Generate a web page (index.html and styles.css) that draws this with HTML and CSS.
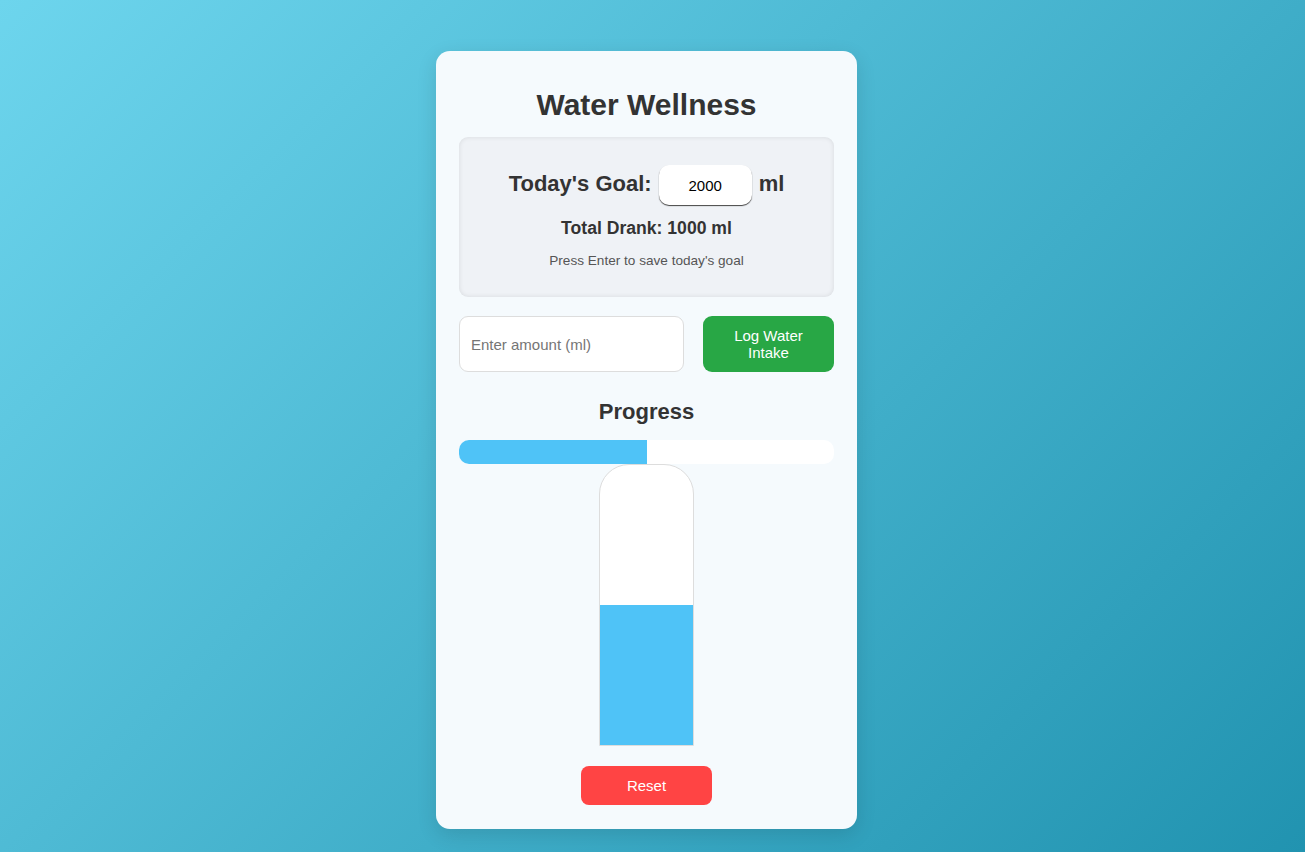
FILE: index.html
```html
<!DOCTYPE html>
<html lang="en">
<head>
<meta charset="utf-8">
<title>Water Wellness</title>
<link rel="stylesheet" href="styles.css">
</head>
<body>
<main class="card">
  <h1 class="title">Water Wellness</h1>
  <section class="goal-box">
    <div class="goal-row">
      <span class="goal-label">Today's Goal:</span>
      <input class="goal-input" type="text" value="2000">
      <span class="goal-label">ml</span>
    </div>
    <p class="total">Total Drank: 1000 ml</p>
    <p class="hint">Press Enter to save today's goal</p>
  </section>
  <div class="log-row">
    <input class="amount-input" type="text" placeholder="Enter amount (ml)">
    <button class="log-btn">Log Water Intake</button>
  </div>
  <h3 class="progress-title">Progress</h3>
  <div class="bar"><div class="bar-fill" style="width:50%"></div></div>
  <div class="bottle"><div class="bottle-fill" style="height:50%"></div></div>
  <button class="reset-btn">Reset</button>
</main>
</body>
</html>
```

FILE: styles.css
```css
* { box-sizing: border-box; }
html, body { height: 100%; }
body {
  margin: 0;
  font-family: "Liberation Sans", Arial, sans-serif;
  color: #333;
  background: linear-gradient(135deg, #6dd5ed 0%, #2193b0 100%);
  display: flex;
  justify-content: center;
  align-items: flex-start;
  padding: 51px 12px 0 0;
}
.card {
  width: 421px;
  background: #f5fafd;
  border-radius: 14px;
  padding: 23px 23px 24px;
  box-shadow: 0 6px 20px rgba(0, 0, 0, 0.12);
  display: flex;
  flex-direction: column;
  align-items: stretch;
}
.title {
  margin: 14px 0 15px;
  font-size: 30px;
  line-height: 34px;
  text-align: center;
  color: #333;
}
.goal-box {
  height: 160px;
  background: #eff2f6;
  border-radius: 9px;
  box-shadow: inset 0 0 5px rgba(0, 0, 0, 0.1);
  padding: 28px 20px 0;
  text-align: center;
}
.goal-row {
  display: flex;
  justify-content: center;
  align-items: baseline;
  gap: 7px;
  height: 40px;
}
.goal-label {
  font-size: 22px;
  font-weight: bold;
  color: #333;
}
.goal-input {
  width: 93px;
  height: 40px;
  border: none;
  border-radius: 10px;
  background: #fff;
  box-shadow: 0 1px 1px #444;
  font-family: inherit;
  font-size: 15px;
  text-align: center;
  color: #000;
  outline: none;
  padding: 0;
}
.total {
  margin: 13px 0 0;
  font-size: 17.6px;
  line-height: 20px;
  font-weight: bold;
}
.hint {
  margin: 15px 0 0;
  font-size: 13.6px;
  line-height: 16px;
  color: #555;
}
.log-row {
  display: flex;
  gap: 19px;
  margin-top: 19px;
  height: 56px;
}
.amount-input {
  width: 225px;
  height: 56px;
  border: 1px solid #ddd;
  border-radius: 9px;
  background: #fff;
  padding: 0 11px;
  font-family: inherit;
  font-size: 15px;
  color: #333;
  outline: none;
}
.amount-input::placeholder { color: #757575; }
.log-btn {
  flex: 1;
  height: 56px;
  border: none;
  border-radius: 9px;
  background: #28a745;
  color: #fff;
  font-family: inherit;
  font-size: 15px;
  line-height: 17px;
  padding: 0 28px;
}
.progress-title {
  margin: 27px 0 0;
  font-size: 22px;
  line-height: 25px;
  text-align: center;
  color: #333;
}
.bar {
  margin-top: 16px;
  height: 24px;
  background: #fff;
  border-radius: 10px;
  overflow: hidden;
}
.bar-fill {
  height: 100%;
  background: #4fc3f7;
}
.bottle {
  align-self: center;
  width: 95px;
  height: 282px;
  background: #fff;
  border: 1px solid #ddd;
  border-radius: 30px 30px 0 0;
  overflow: hidden;
  display: flex;
  flex-direction: column;
  justify-content: flex-end;
}
.bottle-fill {
  background: #4fc3f7;
  width: 100%;
}
.reset-btn {
  align-self: center;
  margin-top: 20px;
  width: 131px;
  height: 39px;
  border: none;
  border-radius: 8px;
  background: #ff4444;
  color: #fff;
  font-family: inherit;
  font-size: 15px;
}
```
